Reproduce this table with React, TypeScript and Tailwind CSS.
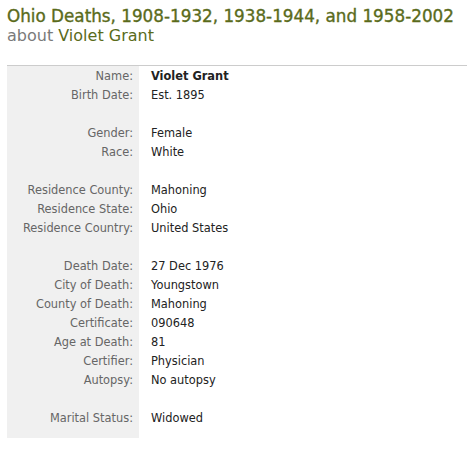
const rows: ([string, string] | null)[] = [
  ['Name:', 'Violet Grant'],
  ['Birth Date:', 'Est. 1895'],
  null,
  ['Gender:', 'Female'],
  ['Race:', 'White'],
  null,
  ['Residence County:', 'Mahoning'],
  ['Residence State:', 'Ohio'],
  ['Residence Country:', 'United States'],
  null,
  ['Death Date:', '27 Dec 1976'],
  ['City of Death:', 'Youngstown'],
  ['County of Death:', 'Mahoning'],
  ['Certificate:', '090648'],
  ['Age at Death:', '81'],
  ['Certifier:', 'Physician'],
  ['Autopsy:', 'No autopsy'],
  null,
  ['Marital Status:', 'Widowed'],
];

export default function App() {
  return (
    <div className="w-[474px] h-[451px] bg-white font-['DejaVu_Sans',Verdana,sans-serif]">
      <div className="px-[7px] pt-[6px]">
        <h1 className="text-[16.8px] leading-[20px] text-[#5a6b1b] font-normal whitespace-nowrap [-webkit-text-stroke:0.35px_#5a6b1b]">
          Ohio Deaths, 1908-1932, 1938-1944, and 1958-2002
        </h1>
        <div className="text-[16px] leading-[20px] text-[#5a6b1b] whitespace-nowrap">
          <span className="text-[#7a7a7a]">about</span> Violet Grant
        </div>
      </div>
      <div className="mx-[7px] mt-[19px] w-[460px] border-t border-[#cccccc] flex">
        <div className="w-[132px] bg-[#f0f0f0] pt-px pb-[10px]">
          {rows.map((r, i) => (
            <div key={i} className="h-[19px] pr-[6px] text-right text-[11.4px] leading-[19px] text-[#666666] whitespace-nowrap">
              {r ? r[0] : ''}
            </div>
          ))}
        </div>
        <div className="flex-1 pt-px pl-[12px]">
          {rows.map((r, i) => (
            <div
              key={i}
              className={`h-[19px] text-[11.4px] leading-[19px] text-[#222222] whitespace-nowrap ${i === 0 ? 'font-bold' : ''}`}
            >
              {r ? r[1] : ''}
            </div>
          ))}
        </div>
      </div>
    </div>
  );
}
